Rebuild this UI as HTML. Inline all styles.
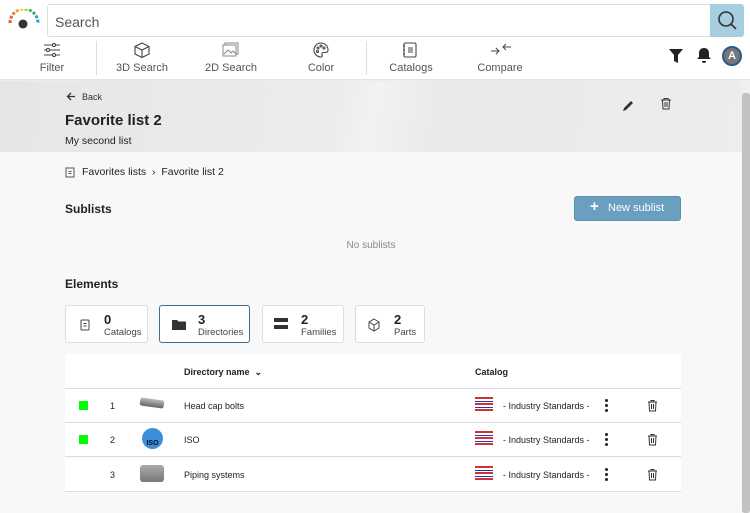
<!DOCTYPE html>
<html><head><meta charset="utf-8"><style>
*{box-sizing:border-box;margin:0;padding:0}
body{width:750px;height:513px;overflow:hidden;background:#f8f8f8;font-family:"Liberation Sans",sans-serif;color:#222;position:relative}
.a{position:absolute}
.top{left:0;top:0;width:750px;height:80px;background:#fff;border-bottom:1px solid #e2e2e2;box-shadow:0 1px 3px rgba(0,0,0,.08)}
.nav{font-size:11px;color:#555;text-align:center;width:80px}
.sep{width:1px;height:34px;background:#ddd;top:41px}
.card{background:#fff;border:1px solid #ddd;border-radius:3px;height:38px;top:305px}
.card b{position:absolute;left:38px;top:6px;font-size:13px}
.card span{position:absolute;left:38px;top:21px;font-size:9.5px;color:#444}
.row{left:65px;width:616px;height:34px;background:#fff;border-bottom:1px solid #ddd;font-size:9px}
.row div{position:absolute}
.k{left:540px;top:10px;width:3px;height:13px}
.k i{display:block;width:3px;height:3px;border-radius:50%;background:#222;margin-bottom:2px}
</style></head><body>
<div class="a top"></div>
<svg class="a" style="left:6px;top:9px" width="36" height="20"><path d="M4 14 A13 13 0 0 1 32 14" stroke="url(#g)" stroke-width="3" fill="none" stroke-dasharray="3 1.5"/><defs><linearGradient id="g"><stop offset="0" stop-color="#e53"/><stop offset=".4" stop-color="#ec3"/><stop offset=".7" stop-color="#4b4"/><stop offset="1" stop-color="#39c"/></linearGradient></defs><circle cx="17" cy="15" r="4.5" fill="#333"/></svg>
<div class="a" style="left:47px;top:4px;width:663px;height:33px;border:1px solid #ddd;border-right:none;border-radius:3px 0 0 3px;background:#fff;font-size:14px;color:#555;padding:9px 7px">Search</div>
<div class="a" style="left:710px;top:4px;width:34px;height:33px;background:#a7cde0;border-radius:0 3px 3px 0"><svg width="34" height="33"><circle cx="16" cy="15" r="7" stroke="#333" stroke-width="1.6" fill="none"/><path d="M21 20l5 5" stroke="#333" stroke-width="1.6"/></svg></div>
<svg class="a" style="left:42px;top:42px" width="20" height="16" stroke="#444" fill="none" stroke-width="1.1"><path d="M2 3h16M2 8h16M2 13h16"/><circle cx="12" cy="3" r="1.6" fill="#fff"/><circle cx="6" cy="8" r="1.6" fill="#fff"/><circle cx="12" cy="13" r="1.6" fill="#fff"/></svg>
<div class="a nav" style="left:12px;top:62px">Filter</div>
<div class="a sep" style="left:96px"></div>
<svg class="a" style="left:133px;top:41px" width="18" height="18" stroke="#444" fill="none" stroke-width="1.1"><path d="M9 2l7 3.5v7.5L9 16.5 2 13V5.5zM2 5.5L9 9l7-3.5M9 9v7.5"/></svg>
<div class="a nav" style="left:102px;top:62px">3D Search</div>
<svg class="a" style="left:222px;top:42px" width="18" height="16" stroke="#888" fill="none" stroke-width="1"><rect x="3" y="1" width="13" height="11"/><rect x="1" y="3" width="13" height="11" fill="#fff"/><path d="M2 12l4-4 3 3 2-2 3 3"/></svg>
<div class="a nav" style="left:191px;top:62px">2D Search</div>
<svg class="a" style="left:312px;top:41px" width="18" height="18" stroke="#444" fill="none" stroke-width="1.1"><path d="M9 2a7 7 0 1 0 0 14c1.5 0 1.5-1.5 1-2.5s0-2 1.5-2H14a2.5 2.5 0 0 0 2-3A7 7 0 0 0 9 2z"/><circle cx="6" cy="7" r="1"/><circle cx="9" cy="5" r="1"/><circle cx="12" cy="7" r="1"/><circle cx="5.5" cy="10.5" r="1"/></svg>
<div class="a nav" style="left:281px;top:62px">Color</div>
<div class="a sep" style="left:366px"></div>
<svg class="a" style="left:402px;top:42px" width="16" height="16" stroke="#444" fill="none" stroke-width="1.1"><rect x="2" y="1" width="12" height="14" rx="1.5"/><path d="M6 6h5M6 8h5M6 10h5M1 4h2M1 8h2M1 12h2"/></svg>
<div class="a nav" style="left:371px;top:62px">Catalogs</div>
<svg class="a" style="left:490px;top:42px" width="22" height="14" stroke="#444" fill="none" stroke-width="1"><path d="M1 9h8M6 6l3 3-3 3M21 5h-8M16 2l-3 3 3 3"/></svg>
<div class="a nav" style="left:460px;top:62px">Compare</div>
<svg class="a" style="left:668px;top:48px" width="16" height="16"><path d="M1 1h14l-5 6v8l-4-2V7z" fill="#222"/></svg>
<svg class="a" style="left:696px;top:46px" width="16" height="18"><path d="M8 2c-3 0-5 2-5 5v4l-2 2h14l-2-2V7c0-3-2-5-5-5zM6 15h4a2 2 0 0 1-4 0z" fill="#222"/></svg>
<div class="a" style="left:722px;top:46px;width:20px;height:20px;border-radius:50%;background:#777;border:2px solid #2a5a88;color:#fff;font-size:11px;font-weight:bold;text-align:center;line-height:16px">A</div>
<div class="a" style="left:0;top:81px;width:742px;height:71px;background:linear-gradient(100deg,#e6e6e6 0%,#ececec 45%,#f2f2f2 50%,#e9e9e9 60%,#ededed 100%)"></div>
<div class="a" style="left:742px;top:81px;width:8px;height:432px;background:#f0f0f0"><div style="margin-top:12px;height:420px;background:#c2c2c2;border-radius:3px"></div></div>
<svg class="a" style="left:66px;top:92px" width="10" height="9" stroke="#333" fill="none" stroke-width="1.3"><path d="M9 4.5H2M5 1L1.5 4.5 5 8"/></svg>
<div class="a" style="left:82px;top:92px;font-size:9px;color:#333">Back</div>
<div class="a" style="left:65px;top:112px;font-size:15px;font-weight:bold">Favorite list 2</div>
<div class="a" style="left:65px;top:135px;font-size:10.5px">My second list</div>
<svg class="a" style="left:622px;top:99px" width="13" height="13"><path d="M1 12l1-3 7-7 2 2-7 7z" fill="#333"/></svg>
<svg class="a" style="left:660px;top:97px" width="12" height="13" stroke="#333" fill="none" stroke-width="1"><path d="M1 3h10M4 3V1.5h4V3M2.5 3l.5 9h6l.5-9M5 5v5M7 5v5"/></svg>
<svg class="a" style="left:65px;top:167px" width="10" height="11" stroke="#555" fill="none" stroke-width="1"><rect x="1" y="1" width="8" height="9"/><path d="M3.5 4.5h3M3.5 6.5h3"/></svg>
<div class="a" style="left:82px;top:166px;font-size:10.5px">Favorites lists &nbsp;›&nbsp; Favorite list 2</div>
<div class="a" style="left:65px;top:202px;font-size:12px;font-weight:bold">Sublists</div>
<div class="a" style="left:574px;top:196px;width:107px;height:25px;background:#6a9fbf;border:1px solid #5b90b0;border-radius:3px;color:#fff;font-size:11px;padding:5px 0 0 16px"><b style="font-size:15px;position:absolute;left:15px;top:1px">+</b><span style="margin-left:17px">New sublist</span></div>
<div class="a" style="left:0;width:742px;top:240px;text-align:center;font-size:10px;color:#888">No sublists</div>
<div class="a" style="left:65px;top:277px;font-size:12px;font-weight:bold">Elements</div>
<div class="a card" style="left:65px;width:83px"><svg class="a" style="left:14px;top:13px" width="10" height="12" stroke="#444" fill="none"><rect x="1" y="1" width="8" height="10" rx="1"/><path d="M3.5 4.5h3M3.5 7h3"/></svg><b>0</b><span>Catalogs</span></div>
<div class="a card" style="left:159px;width:91px;border-color:#3c6e93"><svg class="a" style="left:11px;top:12px" width="16" height="13"><path d="M1 2h5l1.5 1.5H15V12H1z" fill="#333"/></svg><b>3</b><span>Directories</span></div>
<div class="a card" style="left:262px;width:82px"><div class="a" style="left:11px;top:12px;width:14px;height:4px;background:#333"></div><div class="a" style="left:11px;top:19px;width:14px;height:4px;background:#333"></div><b>2</b><span>Families</span></div>
<div class="a card" style="left:355px;width:70px"><svg class="a" style="left:11px;top:12px" width="14" height="14" stroke="#444" fill="none"><path d="M7 1l5 3v6l-5 3-5-3V4zM2 4l5 3 5-3M7 7v6"/></svg><b>2</b><span>Parts</span></div>
<div class="a row" style="top:354px;height:35px;font-weight:bold"><div style="left:119px;top:13px">Directory name&nbsp;&nbsp;⌄</div><div style="left:410px;top:13px">Catalog</div></div>
<div class="a row" style="top:389px"><div style="left:14px;top:12px;width:9px;height:9px;background:#0f0"></div><div style="left:45px;top:12px">1</div><div style="left:75px;top:10px;width:24px;height:8px;background:linear-gradient(#bbb,#666);border-radius:2px;transform:rotate(8deg)"></div><div style="left:119px;top:12px">Head cap bolts</div><div style="left:410px;top:8px;width:18px;height:16px;background:repeating-linear-gradient(#c33 0 2px,#fff 2px 4px,#33a 4px 5px,#fff 5px 6px)"></div><div style="left:438px;top:12px">- Industry Standards -</div><div class="k"><i></i><i></i><i></i></div><svg style="position:absolute;left:582px;top:10px" width="11" height="13" stroke="#333" fill="none"><path d="M1 3h9M4 3V1.5h3V3M2 3l.5 9h6l.5-9M4.5 5v5M6.5 5v5"/></svg></div>
<div class="a row" style="top:423px"><div style="left:14px;top:12px;width:9px;height:9px;background:#0f0"></div><div style="left:45px;top:12px">2</div><div style="left:77px;top:5px;width:21px;height:21px;border-radius:50%;background:#3a8fd8;font-size:7px;color:#111;text-align:center;line-height:32px;font-weight:bold">ISO</div><div style="left:119px;top:12px">ISO</div><div style="left:410px;top:8px;width:18px;height:16px;background:repeating-linear-gradient(#c33 0 2px,#fff 2px 4px,#33a 4px 5px,#fff 5px 6px)"></div><div style="left:438px;top:12px">- Industry Standards -</div><div class="k"><i></i><i></i><i></i></div><svg style="position:absolute;left:582px;top:10px" width="11" height="13" stroke="#333" fill="none"><path d="M1 3h9M4 3V1.5h3V3M2 3l.5 9h6l.5-9M4.5 5v5M6.5 5v5"/></svg></div>
<div class="a row" style="top:458px"><div style="left:45px;top:12px">3</div><div style="left:75px;top:7px;width:24px;height:17px;background:linear-gradient(#aaa,#777);border-radius:3px"></div><div style="left:119px;top:12px">Piping systems</div><div style="left:410px;top:8px;width:18px;height:16px;background:repeating-linear-gradient(#c33 0 2px,#fff 2px 4px,#33a 4px 5px,#fff 5px 6px)"></div><div style="left:438px;top:12px">- Industry Standards -</div><div class="k"><i></i><i></i><i></i></div><svg style="position:absolute;left:582px;top:10px" width="11" height="13" stroke="#333" fill="none"><path d="M1 3h9M4 3V1.5h3V3M2 3l.5 9h6l.5-9M4.5 5v5M6.5 5v5"/></svg></div>
</body></html>
